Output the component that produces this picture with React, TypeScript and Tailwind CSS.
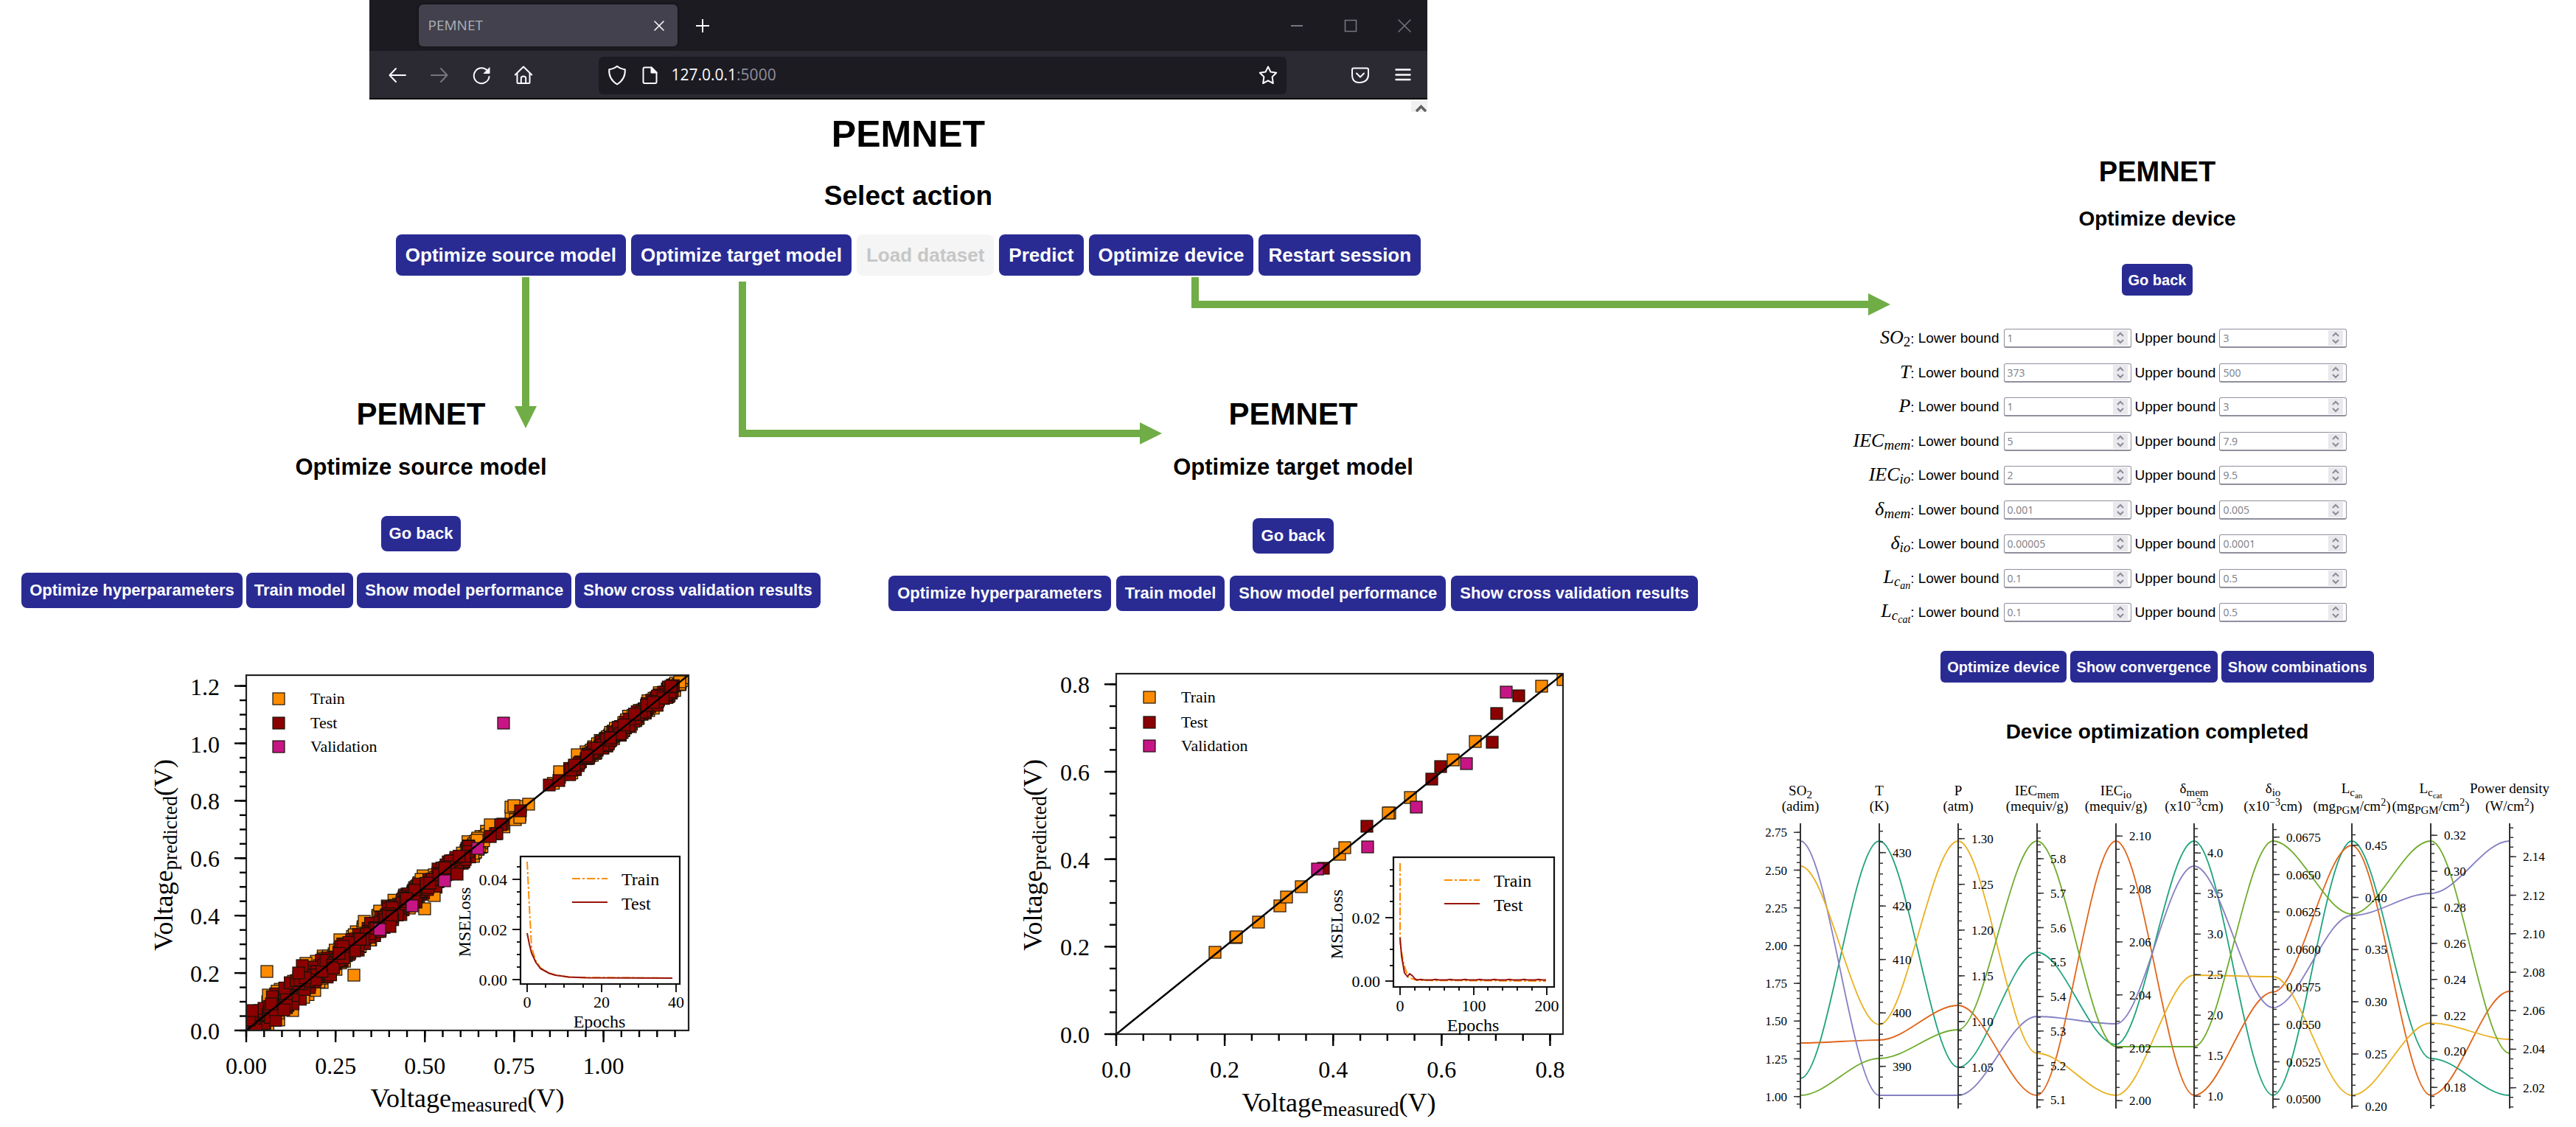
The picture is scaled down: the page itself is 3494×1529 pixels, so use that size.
import React, { useId } from "react";

const ORANGE = "#ff8c00";
const DARKRED = "#8b0000";
const VIOLET = "#c71585";

/* ---------- shared controls ---------- */

type ActionSize = "lg" | "md" | "wide" | "sm";

const ACTION_SIZES: Record<ActionSize, string> = {
  lg: "h-14 rounded-lg px-[13px] text-[26px]",
  md: "h-12 rounded-lg px-[11px] text-[22px]",
  wide: "h-12 rounded-lg px-3 text-[22px]",
  sm: "h-[43px] rounded-md px-[9px] text-[20px]",
};

function Action({ size, disabled, children }: { size: ActionSize; disabled?: boolean; children: React.ReactNode }) {
  return (
    <button
      type="button"
      disabled={disabled}
      className={`${ACTION_SIZES[size]} shrink-0 bg-[#292b93] font-bold leading-none whitespace-nowrap text-white disabled:bg-[#f5f5f5] disabled:text-[#c6c6c6]`}
    >
      {children}
    </button>
  );
}

function IconButton({ label, dim, children }: { label: string; dim?: boolean; children: React.ReactNode }) {
  return (
    <button
      type="button"
      aria-label={label}
      className={`flex size-7 shrink-0 items-center justify-center ${dim ? "text-[#77767e]" : "text-[#fbfbfe]"}`}
    >
      <svg
        viewBox="0 0 28 28"
        className="size-7"
        fill="none"
        stroke="currentColor"
        strokeWidth="2"
        strokeLinecap="round"
        strokeLinejoin="round"
      >
        {children}
      </svg>
    </button>
  );
}

/* ---------- browser window ---------- */

function BrowserChrome() {
  return (
    <header className="font-['Open_Sans','Noto_Sans',sans-serif]">
      <div className="flex h-[69px] items-center bg-[#1c1b22] pr-[17px] pl-[67px]">
        <div className="flex h-[57px] w-[351px] items-center rounded-md bg-[#42414d] pr-[11px] pl-[13px] shadow-[0_0_4px_rgba(0,0,0,0.5)]">
          <span className="flex-1 text-[19px] text-[#aeb0b6]">PEMNET</span>
          <IconButton label="Close tab">
            <path d="M8 8l12 12M20 8L8 20" strokeWidth="1.6" />
          </IconButton>
        </div>
        <div className="ml-5 flex-1">
          <IconButton label="New tab">
            <path d="M14 5v18M5 14h18" strokeLinecap="butt" />
          </IconButton>
        </div>
        <div className="flex gap-[45px]">
          <IconButton label="Minimize" dim>
            <path d="M6 14h16" strokeLinecap="butt" />
          </IconButton>
          <IconButton label="Maximize" dim>
            <path d="M6.5 6.5h15v15h-15z" strokeWidth="1.6" strokeLinejoin="miter" />
          </IconButton>
          <IconButton label="Close window" dim>
            <path d="M6 6l16 16M22 6L6 22" strokeWidth="1.5" />
          </IconButton>
        </div>
      </div>
      <div className="flex h-[66px] items-center border-b-2 border-[#0c0c0d] bg-[#2b2a33] pt-0.5 pr-[19px] pl-6">
        <div className="flex gap-[29px]">
          <IconButton label="Back">
            <path d="M4 14h21M12 5l-8.5 9 8.5 9" />
          </IconButton>
          <IconButton label="Forward" dim>
            <path d="M3 14h21M16 5l8.500 9-8.500 9" />
          </IconButton>
          <IconButton label="Reload">
            <path d="M22.500 8.500A10.400 10.400 0 1 0 24.500 16" />
            <path d="M25 4v7.500h-7.500z" fill="currentColor" strokeWidth="1" />
          </IconButton>
          <IconButton label="Home">
            <path d="M2.800 13.500L14 2.500l11.200 11M5.500 12v11.500q0 1.500 1.500 1.500h14q1.500 0 1.500-1.500V12" />
            <path d="M10.800 25v-7q0-2.500 3.200-2.500t3.200 2.500v7" />
          </IconButton>
        </div>
        <div className="ml-[88px] flex h-[51px] flex-1 items-center rounded-md bg-[#1c1b22] pr-[11px] pl-[11px]">
          <IconButton label="Tracking protection">
            <path d="M14 1.800Q18 5.300 24.800 6.300Q25.500 19.500 14 26.500Q2.500 19.500 3.200 6.300Q10 5.300 14 1.800Z" />
          </IconButton>
          <div className="ml-4">
            <IconButton label="Site information">
              <path d="M7.500 3.500h9l7 7v12.500q0 2-2 2h-14q-2 0-2-2v-17.500q0-2 2-2z" />
              <path d="M16.500 3.500v7h7z" fill="currentColor" />
            </IconButton>
          </div>
          <div role="textbox" aria-label="Address" className="ml-4 flex-1 text-[21px] text-[#fbfbfe]">
            127.0.0.1<span className="text-[#8f8f9a]">:5000</span>
          </div>
          <IconButton label="Bookmark this page">
            <path d="M14 2.500l3.400 7 7.800 1.200-5.600 5.500 1.200 8.800L14 21.300 7.200 25l1.200-8.800-5.600-5.500 7.800-1.200z" />
          </IconButton>
        </div>
        <div className="ml-[86px] flex gap-[30px]">
          <IconButton label="Save to Pocket">
            <path d="M5 4.500h18q2 0 2 2V13q0 10-11 11T3 13V6.500q0-2 2-2z" />
            <path d="M9 11.500l5 5 5-5" />
          </IconButton>
          <IconButton label="Menu">
            <path d="M4.500 6.500h19M4.500 13.500h19M4.500 20h19" strokeWidth="2.400" />
          </IconButton>
        </div>
      </div>
    </header>
  );
}

/* ---------- plots ---------- */

type Pt = [number, number];

function range(from: number, to: number, step: number) {
  const out: number[] = [];
  const n = Math.round((to - from) / step);
  for (let i = 0; i <= n; i++) out.push(from + i * step);
  return out;
}

function Markers({ points, fill }: { points: Pt[]; fill: string }) {
  return (
    <g fill={fill} stroke="#1a1208" strokeWidth="1.2">
      {points.map(([x, y], i) => (
        <rect key={i} x={x - 8} y={y - 8} width="16" height="16" />
      ))}
    </g>
  );
}

type Axis = { at: number; perUnit: number; max: number; minor: number; labels: number[]; digits: number };

type Inset = {
  box: [number, number, number, number];
  yTicks: { y: number; text: string }[];
  yMinor: number[];
  xTicks: { x: number; text: string }[];
  xMinor: number[];
  legendX: number;
  legendY: [number, number];
  labelBase: number;
  mse: Pt;
  epochs: Pt;
  train: string;
  test: string;
};

type PlotProps = {
  title: string;
  viewBox: string;
  frame: [number, number, number, number];
  x: Axis;
  y: Axis;
  train: Pt[];
  test: Pt[];
  validation: Pt[];
  legend: { x: number; rows: [number, number, number] };
  xTitle: Pt;
  yTitle: Pt;
  xLabelBase: number;
  inset: Inset;
};

function AxisTitle({ sub }: { sub: string }) {
  return (
    <>
      Voltage
      <tspan fontSize="27" dy="6">
        {sub}
      </tspan>
      <tspan dy="-6">(V)</tspan>
    </>
  );
}

function ParityPlot(p: PlotProps) {
  const clip = useId();
  const [l, t, r, b] = p.frame;
  const px = (v: number) => p.x.at + v * p.x.perUnit;
  const py = (v: number) => p.y.at - v * p.y.perUnit;
  const [il, it, ir, ib] = p.inset.box;
  const names: [string, string][] = [
    ["Train", ORANGE],
    ["Test", DARKRED],
    ["Validation", VIOLET],
  ];
  return (
    <svg
      viewBox={p.viewBox}
      role="img"
      aria-label={p.title}
      className="h-auto w-full max-w-[760px] font-['Liberation_Serif',serif]"
    >
      <defs>
        <clipPath id={clip}>
          <rect x={l} y={t} width={r - l} height={b - t} />
        </clipPath>
      </defs>
      <g clipPath={`url(#${clip})`}>
        <Markers points={p.train} fill={ORANGE} />
        <Markers points={p.test} fill={DARKRED} />
        <Markers points={p.validation} fill={VIOLET} />
        <line x1={px(0)} y1={py(0)} x2={px(2)} y2={py(2)} stroke="#000" strokeWidth="2.500" />
      </g>
      <rect x={l} y={t} width={r - l} height={b - t} fill="none" stroke="#222" strokeWidth="2.200" />
      <g stroke="#000" strokeWidth="2.400">
        {range(0, p.x.max, p.x.minor).map((v, i) => (
          <line key={i} x1={px(v)} x2={px(v)} y1={b} y2={b + 9} />
        ))}
        {range(0, p.y.max, p.y.minor).map((v, i) => (
          <line key={i} y1={py(v)} y2={py(v)} x1={l - 9} x2={l} />
        ))}
        {p.x.labels.map((v) => (
          <line key={v} x1={px(v)} x2={px(v)} y1={b} y2={b + 16} />
        ))}
        {p.y.labels.map((v) => (
          <line key={v} y1={py(v)} y2={py(v)} x1={l - 16} x2={l} />
        ))}
      </g>
      <g fontSize="32">
        {p.x.labels.map((v) => (
          <text key={v} x={px(v)} y={p.xLabelBase} textAnchor="middle">
            {v.toFixed(p.x.digits)}
          </text>
        ))}
        {p.y.labels.map((v) => (
          <text key={v} x={l - 36} y={py(v) + 12} textAnchor="end">
            {v.toFixed(p.y.digits)}
          </text>
        ))}
      </g>
      <text x={p.xTitle[0]} y={p.xTitle[1]} fontSize="36" textAnchor="middle">
        <AxisTitle sub="measured" />
      </text>
      <text
        transform={`translate(${p.yTitle[0]} ${p.yTitle[1]}) rotate(-90)`}
        fontSize="36"
        textAnchor="middle"
      >
        <AxisTitle sub="predicted" />
      </text>
      {names.map(([name, fill], i) => (
        <g key={name}>
          <Markers points={[[p.legend.x, p.legend.rows[i]]]} fill={fill} />
          <text x={p.legend.x + 43} y={p.legend.rows[i] + 7} fontSize="22">
            {name}
          </text>
        </g>
      ))}

      <rect x={il} y={it} width={ir - il} height={ib - it} fill="#fff" stroke="#111" strokeWidth="2.200" />
      <g stroke="#000" strokeWidth="1.800">
        {p.inset.yTicks.map((k) => (
          <line key={k.text} x1={il - 11} x2={il} y1={k.y} y2={k.y} />
        ))}
        {p.inset.yMinor.map((y) => (
          <line key={y} x1={il - 5} x2={il} y1={y} y2={y} />
        ))}
        {p.inset.xTicks.map((k) => (
          <line key={k.text} x1={k.x} x2={k.x} y1={ib} y2={ib + 11} />
        ))}
        {p.inset.xMinor.map((x) => (
          <line key={x} x1={x} x2={x} y1={ib} y2={ib + 5} />
        ))}
      </g>
      <g fontSize="22">
        {p.inset.yTicks.map((k) => (
          <text key={k.text} x={il - 18} y={k.y + 8} textAnchor="end">
            {k.text}
          </text>
        ))}
        {p.inset.xTicks.map((k) => (
          <text key={k.text} x={k.x} y={p.inset.labelBase} textAnchor="middle">
            {k.text}
          </text>
        ))}
      </g>
      <text
        transform={`translate(${p.inset.mse[0]} ${p.inset.mse[1]}) rotate(-90)`}
        fontSize="24"
        textAnchor="middle"
      >
        MSELoss
      </text>
      <text x={p.inset.epochs[0]} y={p.inset.epochs[1]} fontSize="24" textAnchor="middle">
        Epochs
      </text>
      <path d={p.inset.train} fill="none" stroke={ORANGE} strokeWidth="2" strokeDasharray="11 3 3 3" />
      <path d={p.inset.test} fill="none" stroke="#981509" strokeWidth="2" strokeLinejoin="round" />
      <line
        x1={p.inset.legendX}
        x2={p.inset.legendX + 48}
        y1={p.inset.legendY[0]}
        y2={p.inset.legendY[0]}
        stroke={ORANGE}
        strokeWidth="2"
        strokeDasharray="11 3 3 3"
      />
      <line
        x1={p.inset.legendX}
        x2={p.inset.legendX + 48}
        y1={p.inset.legendY[1]}
        y2={p.inset.legendY[1]}
        stroke="#981509"
        strokeWidth="2"
      />
      <text x={p.inset.legendX + 67} y={p.inset.legendY[0] + 9} fontSize="24">
        Train
      </text>
      <text x={p.inset.legendX + 67} y={p.inset.legendY[1] + 10} fontSize="24">
        Test
      </text>
    </svg>
  );
}

/* Deterministic scatter around the parity line, measured in volts. */
function makeCloud(seed: number, bands: [number, number, number, number][]): Pt[] {
  let s = seed;
  const rnd = () => {
    s = (s * 1664525 + 1013904223) % 4294967296;
    return s / 4294967296;
  };
  const out: Pt[] = [];
  for (const [from, to, count, spread] of bands) {
    for (let i = 0; i < count; i++) {
      const v = from + (to - from) * rnd();
      const e = (rnd() + rnd() - 1) * spread;
      out.push([334 + v * 484.6, 1398 - Math.max(0.002, v + e) * 389.500]);
    }
  }
  return out;
}

const SOURCE_TRAIN: Pt[] = [
  ...makeCloud(11, [
    [0, 0.08, 40, 0.06],
    [0.08, 0.24, 110, 0.058],
    [0.24, 0.5, 170, 0.046],
    [0.5, 0.66, 80, 0.04],
    [0.66, 0.78, 14, 0.03],
    [0.85, 0.92, 8, 0.015],
    [0.95, 1.2, 110, 0.026],
    [1.2, 1.235, 8, 0.014],
  ]),
  [362, 1318], [480, 1323], [364, 1350], [576, 1233], [717, 1091], [693, 1095], [697, 1093],
  [699, 1112], [705, 1109], [665, 1119], [783, 1024], [759, 1047], [648, 1137], [647, 1140],
  [922, 925], [415, 1307], [461, 1275], [494, 1250], [397, 1371], [589, 1215],
];

const SOURCE_TEST: Pt[] = [
  ...makeCloud(29, [
    [0, 0.06, 16, 0.05],
    [0.06, 0.24, 80, 0.05],
    [0.24, 0.5, 150, 0.036],
    [0.5, 0.63, 70, 0.032],
    [0.9, 0.94, 8, 0.016],
    [0.95, 1.2, 110, 0.02],
  ]),
  [706, 1100], [682, 1118], [679, 1119], [672, 1131], [674, 1131], [665, 1135],
  [745, 1065], [758, 1059], [410, 1310], [405, 1320], [342, 1371], [385, 1370], [368, 1362],
  [529, 1257], [620, 1186], [779, 1038], [910, 931],
];

const SOURCE_VALIDATION: Pt[] = [[683, 981], [648, 1151], [603, 1195], [559, 1229], [515, 1261]];

const TARGET_TRAIN: Pt[] = [
  [1648, 1292], [1676, 1272], [1677, 1271], [1707, 1251], [1736, 1229], [1745, 1217], [1765, 1203],
  [1817, 1159], [1824, 1150], [1885, 1103], [1883, 1103], [1913, 1082], [1971, 1031], [2001, 1006],
  [2091, 931], [2120, 922],
];
const TARGET_TEST: Pt[] = [
  [1795, 1178], [1854, 1121], [1942, 1057], [1954, 1040], [2024, 1007], [2030, 968], [2060, 944],
];
const TARGET_VALIDATION: Pt[] = [[1787, 1179], [1855, 1149], [1989, 1036], [1921, 1095], [2043, 939]];

function SourcePlot() {
  return (
    <ParityPlot
      title="Source model: predicted against measured voltage"
      viewBox="191 890 760 639"
      frame={[334, 916, 934, 1398]}
      x={{ at: 334, perUnit: 484.6, max: 1.2, minor: 0.05, labels: [0, 0.25, 0.5, 0.75, 1], digits: 2 }}
      y={{ at: 1398, perUnit: 389.5, max: 1.2, minor: 0.05, labels: [0, 0.2, 0.4, 0.6, 0.8, 1, 1.2], digits: 1 }}
      train={SOURCE_TRAIN}
      test={SOURCE_TEST}
      validation={SOURCE_VALIDATION}
      legend={{ x: 378, rows: [948, 981, 1013] }}
      xTitle={[634, 1502]}
      yTitle={[234, 1160]}
      xLabelBase={1457}
      inset={{
        box: [706, 1162, 922, 1335],
        yTicks: [
          { y: 1193, text: "0.04" },
          { y: 1261, text: "0.02" },
          { y: 1329, text: "0.00" },
        ],
        yMinor: [1176, 1210, 1227, 1244, 1278, 1295, 1312],
        xTicks: [
          { x: 715, text: "0" },
          { x: 816, text: "20" },
          { x: 917, text: "40" },
        ],
        xMinor: [740, 765, 791, 841, 866, 892],
        legendX: 776,
        legendY: [1192, 1224],
        labelBase: 1367,
        mse: [638, 1251],
        epochs: [813, 1394],
        train: "M715 1169L718.500 1240L721 1285L726.500 1303L733 1313L744 1320L755 1323L775 1326L912 1327",
        test: "M715 1266L718 1281L721 1293L727 1306L733 1314L745 1320.500L753 1323L771 1325.500L796 1326.500L912 1327",
      }}
    />
  );
}

const FLAT_TEST = range(1922, 2097, 5)
  .map((x, i) => `L${x} ${i % 4 === 1 ? 1328.8 : 1329.5}`)
  .join("");

function TargetPlot() {
  return (
    <ParityPlot
      title="Target model: predicted against measured voltage"
      viewBox="1374 890 760 639"
      frame={[1514, 914, 2120, 1403]}
      x={{ at: 1514, perUnit: 735.6, max: 0.8, minor: 0.05, labels: [0, 0.2, 0.4, 0.6, 0.8], digits: 1 }}
      y={{ at: 1403, perUnit: 593.3, max: 0.8, minor: 0.05, labels: [0, 0.2, 0.4, 0.6, 0.8], digits: 1 }}
      train={TARGET_TRAIN}
      test={TARGET_TEST}
      validation={TARGET_VALIDATION}
      legend={{ x: 1559, rows: [946, 980, 1012] }}
      xTitle={[1816, 1508]}
      yTitle={[1413, 1160]}
      xLabelBase={1462}
      inset={{
        box: [1890, 1163, 2108, 1339],
        yTicks: [
          { y: 1245, text: "0.02" },
          { y: 1331, text: "0.00" },
        ],
        yMinor: [1180, 1202, 1223, 1267, 1288, 1310],
        xTicks: [
          { x: 1899, text: "0" },
          { x: 1999, text: "100" },
          { x: 2098, text: "200" },
        ],
        xMinor: [1919, 1939, 1959, 1979, 2018, 2038, 2058, 2078],
        legendX: 1959,
        legendY: [1194, 1226],
        labelBase: 1372,
        mse: [1821, 1254],
        epochs: [1998, 1399],
        train: "M1899 1171L1899 1280L1904 1308L1910 1326L1922 1330L2097 1331",
        test: `M1899 1272L1901 1297L1905 1320L1909 1325L1912 1321L1916 1324L1919 1328${FLAT_TEST}`,
      }}
    />
  );
}

/* ---------- parallel coordinates ---------- */

type Run = { t: string; shift?: "sub" | "sup" | "subsub" };

type PAxis = {
  x: number;
  head: Run[];
  unit: Run[];
  a: [number, number];
  b: [number, number];
  major: number;
  minor: number;
  digits: number;
};

const P_TOP = 1117;
const P_BOTTOM = 1504;

const P_AXES: PAxis[] = [
  { x: 2442, head: [{ t: "SO" }, { t: "2", shift: "sub" }], unit: [{ t: "(adim)" }], a: [2.75, 1129.3], b: [1, 1487.7], major: 0.25, minor: 0.05, digits: 2 },
  { x: 2549, head: [{ t: "T" }], unit: [{ t: "(K)" }], a: [430, 1156.7], b: [390, 1446.7], major: 10, minor: 2, digits: 0 },
  { x: 2656, head: [{ t: "P" }], unit: [{ t: "(atm)" }], a: [1.3, 1137.7], b: [1.05, 1448], major: 0.05, minor: 0.01, digits: 2 },
  { x: 2763, head: [{ t: "IEC" }, { t: "mem", shift: "sub" }], unit: [{ t: "(mequiv/g)" }], a: [5.8, 1165], b: [5.1, 1492.3], major: 0.1, minor: 0.02, digits: 1 },
  { x: 2870, head: [{ t: "IEC" }, { t: "io", shift: "sub" }], unit: [{ t: "(mequiv/g)" }], a: [2.1, 1134.3], b: [2, 1493.3], major: 0.02, minor: 0.005, digits: 2 },
  { x: 2976, head: [{ t: "δ" }, { t: "mem", shift: "sub" }], unit: [{ t: "(x10" }, { t: "−3", shift: "sup" }, { t: "cm)" }], a: [4, 1157.3], b: [1, 1487.3], major: 0.5, minor: 0.1, digits: 1 },
  { x: 3083, head: [{ t: "δ" }, { t: "io", shift: "sub" }], unit: [{ t: "(x10" }, { t: "−3", shift: "sup" }, { t: "cm)" }], a: [0.0675, 1135.7], b: [0.05, 1491.3], major: 0.0025, minor: 0.0005, digits: 4 },
  { x: 3190, head: [{ t: "L" }, { t: "c", shift: "sub" }, { t: "an", shift: "subsub" }], unit: [{ t: "(mg" }, { t: "PGM", shift: "sub" }, { t: "/cm" }, { t: "2", shift: "sup" }, { t: ")" }], a: [0.45, 1146.7], b: [0.2, 1500.7], major: 0.05, minor: 0.01, digits: 2 },
  { x: 3297, head: [{ t: "L" }, { t: "c", shift: "sub" }, { t: "cat", shift: "subsub" }], unit: [{ t: "(mg" }, { t: "PGM", shift: "sub" }, { t: "/cm" }, { t: "2", shift: "sup" }, { t: ")" }], a: [0.32, 1133.3], b: [0.18, 1475.3], major: 0.02, minor: 0.005, digits: 2 },
  { x: 3404, head: [{ t: "Power density" }], unit: [{ t: "(W/cm" }, { t: "2", shift: "sup" }, { t: ")" }], a: [2.14, 1162.3], b: [2.02, 1475.7], major: 0.02, minor: 0.005, digits: 2 },
];

const P_LINES: { color: string; y: number[] }[] = [
  { color: "#1fa37d", y: [1463, 1141, 1448, 1292, 1417, 1141, 1486, 1141, 1436, 1486] },
  { color: "#e0651a", y: [1415, 1411, 1364, 1486, 1141, 1486, 1346, 1147, 1486, 1345] },
  { color: "#8680c4", y: [1141, 1486, 1486, 1379, 1389, 1175, 1367, 1242, 1212, 1141] },
  { color: "#e9b021", y: [1175, 1390, 1141, 1429, 1486, 1323, 1325, 1486, 1388, 1410] },
  { color: "#6fac2c", y: [1486, 1436, 1397, 1141, 1420, 1420, 1141, 1240, 1141, 1429] },
];

const SHIFT = {
  base: { level: 0, size: 19 },
  sub: { level: 4, size: 15 },
  sup: { level: -7, size: 14 },
  subsub: { level: 7, size: 11 },
};

function RunText({ x, y, runs }: { x: number; y: number; runs: Run[] }) {
  let level = 0;
  return (
    <text x={x} y={y} fontSize="19" textAnchor="middle">
      {runs.map((run, i) => {
        const s = SHIFT[run.shift ?? "base"];
        const dy = s.level - level;
        level = s.level;
        return (
          <tspan key={i} dy={dy} fontSize={s.size}>
            {run.t}
          </tspan>
        );
      })}
    </text>
  );
}

function ParallelPlot() {
  return (
    <svg
      viewBox="2366 1040 1128 489"
      role="img"
      aria-label="Parallel coordinates of the optimized devices"
      className="h-auto w-full font-['Liberation_Serif',serif]"
    >
      {P_LINES.map((ln) => (
        <path
          key={ln.color}
          fill="none"
          stroke={ln.color}
          strokeWidth="1.800"
          d={ln.y
            .map((y, i) => {
              const x = P_AXES[i].x;
              if (i === 0) return `M${x} ${y}`;
              const x0 = P_AXES[i - 1].x;
              const k = (x - x0) / 3;
              return `C${x0 + k} ${ln.y[i - 1]} ${x - k} ${y} ${x} ${y}`;
            })
            .join("")}
        />
      ))}
      {P_AXES.map((ax, i) => {
        const scale = (ax.b[1] - ax.a[1]) / (ax.b[0] - ax.a[0]);
        const yOf = (v: number) => ax.a[1] + (v - ax.a[0]) * scale;
        const dir = i === 0 ? -1 : 1;
        const majors = range(ax.b[0], ax.a[0], ax.major);
        const minors = range(ax.b[0] - ax.major, ax.a[0] + ax.major, ax.minor).filter(
          (v) => yOf(v) > P_TOP + 6 && yOf(v) < P_BOTTOM
        );
        return (
          <g key={i}>
            <g stroke="#333" strokeWidth="1.500">
              <line x1={ax.x} x2={ax.x} y1={P_TOP} y2={P_BOTTOM} strokeWidth="2" />
              {minors.map((v) => (
                <line key={v} x1={ax.x} x2={ax.x + 5 * dir} y1={yOf(v)} y2={yOf(v)} />
              ))}
              {majors.map((v) => (
                <line key={v} x1={ax.x} x2={ax.x + 9 * dir} y1={yOf(v)} y2={yOf(v)} />
              ))}
            </g>
            <g fontSize="17" textAnchor={i === 0 ? "end" : "start"}>
              {majors.map((v) => (
                <text key={v} x={ax.x + 18 * dir} y={yOf(v) + 6}>
                  {v.toFixed(ax.digits)}
                </text>
              ))}
            </g>
            <RunText x={ax.x} y={i > 4 ? 1076 : 1079} runs={ax.head} />
            <RunText x={ax.x} y={1100} runs={ax.unit} />
          </g>
        );
      })}
    </svg>
  );
}

/* ---------- device form ---------- */

function Stepper({ id, placeholder }: { id: string; placeholder: string }) {
  return (
    <span className="flex h-[26px] w-[173px] items-center rounded-[3px] border border-b-2 border-[#8f8f9d] bg-white pr-[4px]">
      <input
        id={id}
        type="number"
        step="any"
        placeholder={placeholder}
        className="h-full min-w-0 flex-1 pl-1 font-['Open_Sans','Noto_Sans',sans-serif] text-[14px] outline-none [appearance:textfield] placeholder:text-[#7c7c84] [&::-webkit-inner-spin-button]:appearance-none"
      />
      <svg viewBox="0 0 20 21" className="h-[21px] w-5 bg-[#e9e9ed]" fill="none" stroke="#8b8b98" strokeWidth="2">
        <path d="M6 8l4-4 4 4M6 13l4 4 4-4" />
      </svg>
    </span>
  );
}

const SUB = "relative top-1 text-[19px]";
const SUBSUB = "relative top-1 text-[14px]";

const BOUNDS: { key: string; name: React.ReactNode; lo: string; hi: string }[] = [
  { key: "so2", name: <>SO<span className={`${SUB} not-italic`}>2</span></>, lo: "1", hi: "3" },
  { key: "t", name: <>T</>, lo: "373", hi: "500" },
  { key: "p", name: <>P</>, lo: "1", hi: "3" },
  { key: "iecmem", name: <>IEC<span className={SUB}>mem</span></>, lo: "5", hi: "7.9" },
  { key: "iecio", name: <>IEC<span className={SUB}>io</span></>, lo: "2", hi: "9.5" },
  { key: "dmem", name: <>δ<span className={SUB}>mem</span></>, lo: "0.001", hi: "0.005" },
  { key: "dio", name: <>δ<span className={SUB}>io</span></>, lo: "0.00005", hi: "0.0001" },
  { key: "lcan", name: <>L<span className={SUB}>c<span className={SUBSUB}>an</span></span></>, lo: "0.1", hi: "0.5" },
  { key: "lccat", name: <>L<span className={SUB}>c<span className={SUBSUB}>cat</span></span></>, lo: "0.1", hi: "0.5" },
];

function DeviceForm() {
  return (
    <form className="mt-[45px] flex h-[398px] flex-col justify-between pr-[162px] text-[19px] leading-[26px]">
      {BOUNDS.map((row) => (
        <div key={row.key} className="flex h-[26px] items-center">
          <span className="w-[90px] text-right whitespace-nowrap">
            <span className="font-['Liberation_Serif',serif] text-[26px] italic">{row.name}</span>:
          </span>
          <label htmlFor={`${row.key}-lo`} className="mr-1.5 ml-[5px] whitespace-nowrap">
            Lower bound
          </label>
          <Stepper id={`${row.key}-lo`} placeholder={row.lo} />
          <label htmlFor={`${row.key}-hi`} className="mx-[5px] whitespace-nowrap">
            Upper bound
          </label>
          <Stepper id={`${row.key}-hi`} placeholder={row.hi} />
        </div>
      ))}
    </form>
  );
}

/* ---------- page ---------- */

function Connectors() {
  return (
    <svg
      viewBox="0 0 3494 1529"
      aria-hidden="true"
      className="pointer-events-none absolute top-0 left-0 h-auto w-full"
      fill="#70ad47"
    >
      <path d="M708 376h10v175h10l-15 30-15-30h10z" />
      <path d="M1002 382h10v201h534v-10l30 15-30 15v-10h-544z" />
      <path d="M1616 376h10v32h908v-10l30 15-30 15v-10h-918z" />
    </svg>
  );
}

export default function App() {
  return (
    <main className="relative flex w-full items-start overflow-hidden bg-white font-['Liberation_Sans',Arial,sans-serif] text-black">
      <div className="grow basis-[2366px]">
        <div className="flex justify-center pl-[70px]">
          <section className="w-[1435px]">
            <BrowserChrome />
            <div className="relative flex flex-col items-center pt-[17px] pl-7">
              <div className="absolute top-0.5 right-0 flex h-[15px] w-[22px] items-end justify-center overflow-hidden bg-[#f0f0f0]">
                <svg viewBox="0 0 22 15" className="h-[15px] w-[22px]" fill="none" stroke="#606060" strokeWidth="3.500">
                  <path d="M7 14l6.500-6.500 6.500 6.500" />
                </svg>
              </div>
              <h1 className="text-[50px] leading-[60px] font-bold">PEMNET</h1>
              <h2 className="mt-8 text-[37px] leading-[44px] font-bold">Select action</h2>
              <div className="mt-[30px] flex gap-[7px]">
                <Action size="lg">Optimize source model</Action>
                <Action size="lg">Optimize target model</Action>
                <Action size="lg" disabled>Load dataset</Action>
                <Action size="lg">Predict</Action>
                <Action size="lg">Optimize device</Action>
                <Action size="lg">Restart session</Action>
              </div>
            </div>
          </section>
        </div>

        <div className="mt-[163px] flex">
          <section className="flex grow basis-[1142px] flex-col items-center">
            <h1 className="text-[42px] leading-[50px] font-bold">PEMNET</h1>
            <h2 className="mt-7 text-[31px] leading-[38px] font-bold">Optimize source model</h2>
            <div className="mt-[47px]">
              <Action size="md">Go back</Action>
            </div>
            <div className="mt-[29px] flex gap-[5px]">
              <Action size="md">Optimize hyperparameters</Action>
              <Action size="md">Train model</Action>
              <Action size="md">Show model performance</Action>
              <Action size="md">Show cross validation results</Action>
            </div>
            <div className="mt-[65px] flex w-full justify-center">
              <SourcePlot />
            </div>
          </section>

          <section className="flex grow basis-[1224px] flex-col items-center">
            <h1 className="text-[42px] leading-[50px] font-bold">PEMNET</h1>
            <h2 className="mt-7 text-[31px] leading-[38px] font-bold">Optimize target model</h2>
            <div className="mt-[50px]">
              <Action size="wide">Go back</Action>
            </div>
            <div className="mt-[30px] flex gap-[7px]">
              <Action size="wide">Optimize hyperparameters</Action>
              <Action size="wide">Train model</Action>
              <Action size="wide">Show model performance</Action>
              <Action size="wide">Show cross validation results</Action>
            </div>
            <div className="mt-[61px] flex w-full justify-center">
              <TargetPlot />
            </div>
          </section>
        </div>
      </div>

      <section className="grow basis-[1128px] pt-[210px]">
        <div className="flex flex-col items-center pr-2">
          <h1 className="text-[38px] leading-[46px] font-bold">PEMNET</h1>
          <h2 className="mt-6 text-[28px] leading-[34px] font-bold">Optimize device</h2>
          <div className="mt-11">
            <Action size="sm">Go back</Action>
          </div>
          <DeviceForm />
          <div className="mt-[39px] flex gap-[5px]">
            <Action size="sm">Optimize device</Action>
            <Action size="sm">Show convergence</Action>
            <Action size="sm">Show combinations</Action>
          </div>
          <h2 className="mt-[50px] text-[28px] leading-[34px] font-bold">Device optimization completed</h2>
        </div>
        <div className="mt-[30px]">
          <ParallelPlot />
        </div>
      </section>

      <Connectors />
    </main>
  );
}
